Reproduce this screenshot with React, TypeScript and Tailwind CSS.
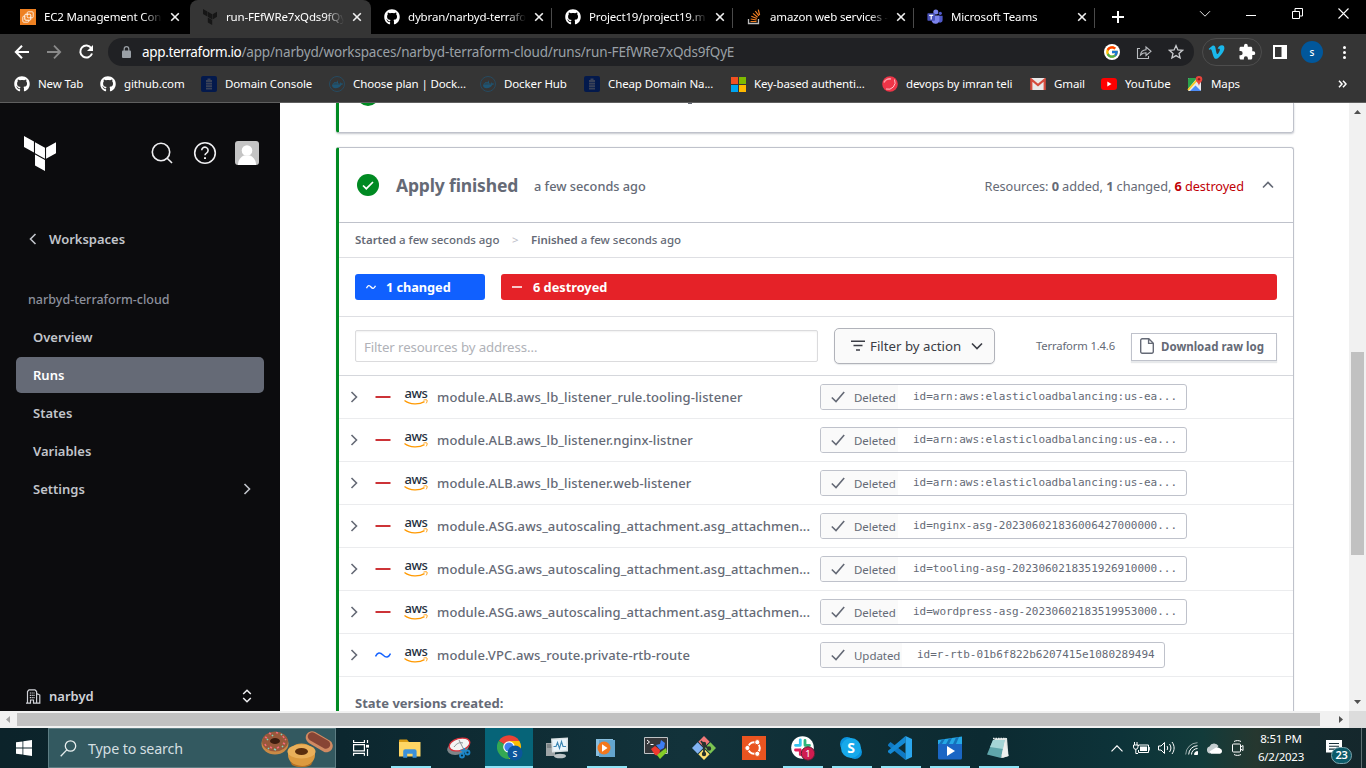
import type { ReactNode } from 'react';
import { FaGithub, FaDocker, FaVimeoV } from 'react-icons/fa';
import { FcGoogle } from 'react-icons/fc';

/* ---------- shared glyphs ---------- */

function Terraform({ className }: { className: string }) {
  return (
    <svg viewBox="1.44 0 21.12 24" preserveAspectRatio="none" className={className} fill="currentColor">
      <path d="M1.44 0v7.575l6.561 3.79V3.787zm21.12 4.227l-6.561 3.791v7.574l6.56-3.787zM8.72 4.23v7.575l6.561 3.787V8.018zm0 8.405v7.575L15.28 24v-7.578z" />
    </svg>
  );
}

function Chevron({ d, className }: { d: 'up' | 'down' | 'left' | 'right'; className: string }) {
  const paths = {
    up: 'M3 10.5 8 5.5l5 5',
    down: 'M3 5.5l5 5 5-5',
    left: 'M10.5 3l-5 5 5 5',
    right: 'M5.5 3l5 5-5 5',
  };
  return (
    <svg viewBox="0 0 16 16" className={className} fill="none" stroke="currentColor" strokeWidth="1.6">
      <path d={paths[d]} />
    </svg>
  );
}

/* ---------- browser chrome ---------- */

function Ec2Icon() {
  return (
    <svg viewBox="0 0 16 16" className="h-4 w-4">
      <rect width="16" height="16" fill="#ee8021" />
      <g fill="none" stroke="#fff" strokeWidth="1">
        <rect x="2.8" y="7.2" width="6" height="6" rx="1" opacity=".8" />
        <rect x="4.8" y="5.2" width="6" height="6" rx="1" fill="#ee8021" />
        <rect x="7.2" y="2.8" width="6" height="6" rx="1" opacity=".8" />
      </g>
    </svg>
  );
}

function TeamsIcon() {
  return (
    <svg viewBox="0 0 16 16" className="h-4 w-4">
      <circle cx="13.3" cy="4.3" r="1.6" fill="#5059c9" />
      <path d="M11 6.8h4.6v4.4a2.4 2.4 0 0 1-4.6 1z" fill="#5059c9" />
      <circle cx="8.8" cy="3" r="2.5" fill="#7b83eb" />
      <path d="M4.8 6.4h7.6v5a4 4 0 0 1-7.6 1z" fill="#7b83eb" />
      <rect x="0.4" y="4.2" width="7.6" height="7.6" rx=".8" fill="#4b53bc" />
      <path d="M2.2 6.4h4M4.2 6.4v4" stroke="#fff" strokeWidth="1.2" />
    </svg>
  );
}

function Tab({ icon, title, active, divider, first }: { icon: ReactNode; title: string; active?: boolean; divider?: boolean; first?: boolean }) {
  return (
    <div
      className={
        active
          ? 'relative flex h-[34px] w-[181px] items-center rounded-t-lg bg-[#353535] pl-3'
          : first
            ? 'relative flex h-[34px] w-[182px] items-center pl-3'
            : 'relative flex h-[34px] w-[181px] items-center pl-[13px]'
      }
    >
      <span className={active ? 'flex w-4 justify-center pr-px' : 'flex w-4 justify-center'}>{icon}</span>
      <span className="ml-2 w-[118px] overflow-hidden whitespace-nowrap text-[11.5px] tracking-[-0.16px] text-white [mask-image:linear-gradient(to_right,#000_84%,transparent)]">
        {title}
      </span>
      <svg viewBox="0 0 10 10" className="ml-[8px] h-2.5 w-2.5" stroke="#f1f1f1" strokeWidth="1.6">
        <path d="M1.2 1.2l7.6 7.6M8.8 1.2 1.2 8.8" />
      </svg>
      {divider && <span className="absolute right-0 top-2 h-5 w-px bg-[#4a4a4a]" />}
    </div>
  );
}

function TabStrip() {
  const gh = <FaGithub className="h-4 w-4 text-white" />;
  return (
    <div className="flex h-[34px] shrink-0 bg-black pl-2">
      <Tab icon={<Ec2Icon />} title="EC2 Management Cons" first />
      <Tab icon={<Terraform className="h-4 w-[14px] text-[#161616]" />} title="run-FEfWRe7xQds9fQy" active />
      <Tab icon={gh} title="dybran/narbyd-terrafor" divider />
      <Tab icon={gh} title="Project19/project19.m" divider />
      <Tab
        icon={
          <svg viewBox="0 0 16 16" className="h-4 w-4" fill="none">
            <path d="M2.5 10v4.5h10V10" stroke="#bcbbbb" strokeWidth="1.3" />
            <path d="M4.5 12.5h6M4.7 10l5.9 1M5.3 7.2l5.5 2.3M7 4.4l4.6 3.8M9.3 2l3.6 4.8M12.3.6l1.3 5.4" stroke="#f48024" strokeWidth="1.2" />
          </svg>
        }
        title="amazon web services -"
        divider
      />
      <Tab icon={<TeamsIcon />} title="Microsoft Teams" divider />
      <div className="flex w-[46px] items-center justify-center">
        <svg viewBox="0 0 12 12" className="h-3 w-3" stroke="#fff" strokeWidth="2">
          <path d="M6 0v12M0 6h12" />
        </svg>
      </div>
      <div className="ml-auto flex h-[27px] items-center text-[#e4e4e4]">
        <div className="flex w-[46px] justify-center">
          <svg viewBox="0 0 12 8" className="h-2 w-3" fill="none" stroke="currentColor">
            <path d="M1 1.2l5 5 5-5" />
          </svg>
        </div>
        <div className="flex w-[46px] justify-center">
          <span className="mt-[3px] h-px w-2.5 bg-white" />
        </div>
        <div className="flex w-[46px] justify-center">
          <svg viewBox="0 0 11 11" className="h-[11px] w-[11px]" fill="none" stroke="#fff">
            <path d="M.5 3.5h7v7h-7zM3 3V.5h7.5V8H8" />
          </svg>
        </div>
        <div className="flex w-[46px] justify-center">
          <svg viewBox="0 0 11 11" className="h-[11px] w-[11px]" stroke="#fff" strokeWidth="1.1">
            <path d="M.5.5l10 10M10.5.5l-10 10" />
          </svg>
        </div>
      </div>
    </div>
  );
}

function AddressBar() {
  return (
    <div className="flex h-[35px] shrink-0 items-center bg-[#353535] pt-px">
      <div className="flex w-[108px] items-center pl-[14px]">
        <svg viewBox="0 0 16 16" className="h-4 w-4" fill="none" stroke="#fff" strokeWidth="2">
          <path d="M15 8H2M8 1.7 1.8 8 8 14.3" />
        </svg>
        <svg viewBox="0 0 16 16" className="ml-4 h-4 w-4" fill="none" stroke="#8a8a8a" strokeWidth="1.8">
          <path d="M1 8h13M8 1.7 14.2 8 8 14.3" />
        </svg>
        <svg viewBox="0 0 16 16" className="ml-4 h-4 w-4">
          <path d="M13.3 4.2A6 6 0 1 0 14 9.5" fill="none" stroke="#fff" strokeWidth="2" />
          <path d="M15 1v6H9z" fill="#fff" />
        </svg>
      </div>
      <div className="flex h-7 w-[1086px] items-center rounded-full bg-[#202124] pl-[14px]">
        <svg viewBox="0 0 9 12" className="h-3 w-[9px]">
          <rect y="4.5" width="9" height="7.5" rx="1" fill="#9aa0a6" />
          <path d="M2.2 5V3a2.3 2.3 0 0 1 4.6 0v2" fill="none" stroke="#9aa0a6" strokeWidth="1.2" />
        </svg>
        <span className="ml-[11px] whitespace-nowrap pt-0.5 text-[13.5px] leading-none tracking-[-0.35px] text-white">app.terraform.io</span>
        <span className="whitespace-nowrap pt-0.5 text-[13.5px] leading-none tracking-[-0.16px] text-[#9aa0a6]">
          /app/narbyd/workspaces/narbyd-terraform-cloud/runs/run-FEfWRe7xQds9fQyE
        </span>
        <div className="ml-auto flex items-center gap-4 pr-[10px]">
          <span className="flex h-4 w-4 items-center justify-center rounded-full bg-white">
            <FcGoogle className="h-[14px] w-[14px]" />
          </span>
          <svg viewBox="0 0 16 16" className="h-4 w-4" fill="none" stroke="#b9bcc0" strokeWidth="1.1">
            <path d="M4 4.5H1.5v10h11V12M4.5 11c.4-3.200 2.200-5 5.500-5.200V3l5 4.300-5 4.200V8.800C7.500 8.800 6 9.500 4.500 11z" />
          </svg>
          <svg viewBox="0 0 16 16" className="h-4 w-4" fill="none" stroke="#c9cbce" strokeWidth="1.3">
            <path d="M8 1.600l1.900 4.300 4.700.4-3.600 3.100 1.100 4.600L8 11.600 3.900 14 5 9.400 1.400 6.300l4.700-.4z" />
          </svg>
        </div>
      </div>
      <div className="ml-2 flex h-7 w-[60px] items-center justify-between rounded-full border border-[#4d4d4d] px-[5px]">
        <FaVimeoV className="h-[18px] w-[17px] text-[#1ab7ea]" />
        <svg viewBox="0 0 24 24" className="h-[18px] w-[18px]" fill="#fff">
          <path d="M20.500 11H19V7c0-1.100-.9-2-2-2h-4V3.500a2.500 2.500 0 0 0-5 0V5H4c-1.100 0-2 .9-2 2v3.800h1.500a2.700 2.700 0 0 1 0 5.400H2V20c0 1.100.9 2 2 2h3.800v-1.500a2.700 2.700 0 0 1 5.400 0V22H17c1.100 0 2-.9 2-2v-4h1.500a2.500 2.500 0 0 0 0-5z" />
        </svg>
      </div>
      <svg viewBox="0 0 14 14" className="ml-[11px] h-[14px] w-[14px]">
        <path d="M1 1h12v12H1z" fill="none" stroke="#fff" strokeWidth="2" />
        <path d="M8.5 0H14v14H8.5z" fill="#fff" />
      </svg>
      <span className="ml-[14px] flex h-[22px] w-[22px] items-center justify-center rounded-full bg-[#01579b] text-[10px] font-medium text-white">
        s
      </span>
      <div className="ml-[20px] flex flex-col gap-[2px]">
        <span className="h-[3px] w-[3px] rounded-full bg-white" />
        <span className="h-[3px] w-[3px] rounded-full bg-white" />
        <span className="h-[3px] w-[3px] rounded-full bg-white" />
      </div>
    </div>
  );
}

function DomainIcon() {
  return (
    <svg viewBox="0 0 16 16" className="h-4 w-4">
      <rect width="16" height="16" rx="2" fill="#03194c" />
      <g fill="#3a4258">
        <rect x="6.5" y="2.5" width="3" height="1.5" />
        <rect x="5" y="4" width="6" height="2" />
        <rect x="5" y="6.6" width="6" height="2" />
        <rect x="5" y="9.2" width="6" height="2" />
        <rect x="5" y="11.8" width="6" height="1.7" />
      </g>
    </svg>
  );
}

function DockerIcon() {
  return (
    <span className="flex h-4 w-4 items-center justify-center rounded-full border border-[#264a60]">
      <FaDocker className="h-[11px] w-[11px] text-[#1f5573]" />
    </span>
  );
}

function Bookmark({ icon, label, w }: { icon: ReactNode; label: string; w: string }) {
  return (
    <div className={'flex shrink-0 items-center ' + w}>
      <span className="flex w-4 shrink-0 justify-center">{icon}</span>
      <span className="ml-2 whitespace-nowrap text-[11.5px] tracking-[-0.12px] text-white">{label}</span>
    </div>
  );
}

function BookmarksBar() {
  const gh = <FaGithub className="h-4 w-4 text-white" />;
  return (
    <div className="flex h-[34px] shrink-0 items-center border-b border-[#5f5f5f] bg-[#353535] pb-[3px] pl-[14px]">
      <Bookmark icon={gh} label="New Tab" w="w-[86px]" />
      <Bookmark icon={gh} label="github.com" w="w-[101px]" />
      <Bookmark icon={<DomainIcon />} label="Domain Console" w="w-[128px]" />
      <Bookmark icon={<DockerIcon />} label="Choose plan | Dock..." w="w-[151px]" />
      <Bookmark icon={<DockerIcon />} label="Docker Hub" w="w-[104px]" />
      <Bookmark icon={<DomainIcon />} label="Cheap Domain Na..." w="w-[146px]" />
      <Bookmark
        icon={
          <svg viewBox="0 0 15 15" className="h-[15px] w-[15px]">
            <path d="M0 0h7v7H0z" fill="#f25022" />
            <path d="M8 0h7v7H8z" fill="#7fba00" />
            <path d="M0 8h7v7H0z" fill="#00a4ef" />
            <path d="M8 8h7v7H8z" fill="#ffb900" />
          </svg>
        }
        label="Key-based authenti..."
        w="w-[152px]"
      />
      <Bookmark
        icon={
          <svg viewBox="0 0 16 16" className="h-4 w-4">
            <circle cx="8" cy="8" r="7.8" fill="#ee3548" />
            <path d="M2 6.500a6 5 0 0 1 7-3.500" stroke="#ff9aa4" fill="none" strokeWidth="1.600" />
            <path d="M4 13a7 7 0 0 0 8.500-9.500" stroke="#ffc0c6" fill="none" strokeWidth="1" />
          </svg>
        }
        label="devops by imran teli"
        w="w-[148px]"
      />
      <Bookmark
        icon={
          <svg viewBox="0 0 16 12" className="h-3 w-4">
            <rect x="1" width="14" height="12" fill="#e9e9e9" />
            <path d="M1.300 12V1.500L8 7l6.700-5.500V12" fill="none" stroke="#d54b3d" strokeWidth="2.200" />
          </svg>
        }
        label="Gmail"
        w="w-[71px]"
      />
      <Bookmark
        icon={
          <svg viewBox="0 0 16 12" className="h-3 w-4">
            <rect width="16" height="12" rx="3" fill="#f00" />
            <path d="M6.300 3.500v5L10.500 6z" fill="#fff" />
          </svg>
        }
        label="YouTube"
        w="w-[86px]"
      />
      <Bookmark
        icon={
          <svg viewBox="0 0 16 16" className="h-4 w-4">
            <rect x="1" y="2" width="13" height="13" rx="1" fill="#e8eaed" />
            <path d="M1 3a1 1 0 0 1 1-1h8L1 13z" fill="#2ba24c" />
            <path d="M3 15l5.500-5.500L14 15z" fill="#4c8bf5" />
            <path d="M1 14 10 4" stroke="#fbc91b" strokeWidth="1.800" />
            <path d="M12 0a3.300 3.300 0 0 1 3.300 3.300C15.300 6 12.500 6.500 12 10c-.5-3.500-3.300-4-3.300-6.700A3.300 3.300 0 0 1 12 0z" fill="#e8453c" />
            <circle cx="12" cy="3.300" r="1.200" fill="#8c1d18" />
          </svg>
        }
        label="Maps"
        w="w-[60px]"
      />
      <svg viewBox="0 0 9 8" className="ml-auto mr-[19px] h-2 w-[9px]" fill="none" stroke="#fff" strokeWidth="1.500">
        <path d="M1 .8 4 4 1 7.200M5 .8 8 4 5 7.200" />
      </svg>
    </div>
  );
}

/* ---------- sidebar ---------- */

function NavItem({ label, active, arrow }: { label: string; active?: boolean; arrow?: boolean }) {
  return (
    <div
      className={
        active
          ? 'mb-0.5 flex h-9 items-center justify-between rounded-[5px] bg-[#656a76] px-[17px] text-white'
          : 'mb-0.5 flex h-9 items-center justify-between px-[17px] text-[#c2c5cb]'
      }
    >
      <span className="pt-0.5">{label}</span>
      {arrow && <Chevron d="right" className="-mr-2 h-4 w-4" />}
    </div>
  );
}

function Sidebar() {
  return (
    <aside className="flex w-[280px] shrink-0 flex-col bg-[#0c0c0e] px-4 text-[13px] font-semibold">
      <div className="flex h-[101px] items-center pl-[8px] pr-[5px]">
        <Terraform className="h-[35px] w-[32px] text-white" />
        <svg viewBox="0 0 24 24" className="-mt-0.5 ml-auto h-6 w-6" fill="none" stroke="#efeff1" strokeWidth="1.600">
          <circle cx="11" cy="11" r="8.700" />
          <path d="M17.200 17.200l4.800 4.800" />
        </svg>
        <svg viewBox="0 0 24 24" className="-mt-0.5 ml-[19px] h-6 w-6" fill="none" stroke="#efeff1" strokeWidth="1.600">
          <circle cx="12" cy="12" r="10.300" />
          <path d="M8.700 9.200a3.200 3.200 0 1 1 4.800 2.900c-1 .6-1.500 1-1.500 2.100" />
          <path d="M12 16.200v1.800" strokeWidth="2" />
        </svg>
        <svg viewBox="0 0 24 24" className="-mt-0.5 ml-[18px] h-6 w-6">
          <rect width="24" height="24" rx="3" fill="#c4c4c4" />
          <circle cx="12" cy="9.500" r="5.300" fill="#fff" />
          <path d="M3 24c0-5 3-8.500 6-9.500h6c3 1 6 4.500 6 9.500z" fill="#fff" />
        </svg>
      </div>
      <div className="mt-[17px] flex h-9 items-center pl-[9px] text-[#c2c5cb]">
        <Chevron d="left" className="h-4 w-4" />
        <span className="ml-2 pt-0.5">Workspaces</span>
      </div>
      <div className="mt-6 flex h-9 items-center pl-3 pt-[3px] text-[12.5px] font-medium text-[#8c909c]">narbyd-terraform-cloud</div>
      <nav className="mt-[2px]">
        <NavItem label="Overview" />
        <NavItem label="Runs" active />
        <NavItem label="States" />
        <NavItem label="Variables" />
        <NavItem label="Settings" arrow />
      </nav>
      <div className="mb-[3px] mt-auto flex h-6 items-center pl-[10px] text-[#d0d2d8]">
        <svg viewBox="0 0 15 15" className="h-[15px] w-[15px]" fill="none" stroke="currentColor" strokeWidth="1.200">
          <path d="M0 14.200h4.500V11h3v3.200h6.300V6l-3-1.500M1.500 14V2.500L3 .8h6l1.600 1.700V14" />
          <path d="M3.800 4h4.800M3.800 6.300h4.800M3.800 8.600h4.800" strokeDasharray="1.200 .6" />
        </svg>
        <span className="ml-2 pt-0.5">narbyd</span>
        <svg viewBox="0 0 10 14" className="ml-auto mr-[12px] h-[14px] w-[10px]" fill="none" stroke="#efeff1" strokeWidth="1.500">
          <path d="M1.200 5 5 1.200 8.800 5M1.200 9 5 12.800 8.800 9" />
        </svg>
      </div>
    </aside>
  );
}

/* ---------- run details ---------- */

function Aws() {
  return (
    <span className="relative block h-[18px] w-6">
      <span className="absolute left-0 top-[-3px] w-6 text-center text-[13px] font-medium leading-[16px] tracking-[-0.35px] text-[#252f3e]">aws</span>
      <svg viewBox="0 0 24 6" className="absolute bottom-px left-0 h-[6px] w-6" fill="none" stroke="#f90" strokeWidth="1.300">
        <path d="M.5 1.400C6 5.800 15 5.800 20.500 2.600" />
        <path d="M19.500 1.100c1.800-.5 3.100-.4 3.500 0s0 2-.8 3.200" strokeWidth="1" />
      </svg>
    </span>
  );
}

const ARN = 'id=arn:aws:elasticloadbalancing:us-ea...';

const resources = [
  { name: 'module.ALB.aws_lb_listener_rule.tooling-listener', state: 'Deleted', id: ARN },
  { name: 'module.ALB.aws_lb_listener.nginx-listner', state: 'Deleted', id: ARN },
  { name: 'module.ALB.aws_lb_listener.web-listener', state: 'Deleted', id: ARN },
  { name: 'module.ASG.aws_autoscaling_attachment.asg_attachmen...', state: 'Deleted', id: 'id=nginx-asg-202306021836006427000000...' },
  { name: 'module.ASG.aws_autoscaling_attachment.asg_attachmen...', state: 'Deleted', id: 'id=tooling-asg-2023060218351926910000...' },
  { name: 'module.ASG.aws_autoscaling_attachment.asg_attachmen...', state: 'Deleted', id: 'id=wordpress-asg-20230602183519953000...' },
  { name: 'module.VPC.aws_route.private-rtb-route', state: 'Updated', id: 'id=r-rtb-01b6f822b6207415e1080289494' },
];

function ResourceRow({ name, state, id }: { name: string; state: string; id: string }) {
  const updated = state === 'Updated';
  return (
    <div className="flex h-[43px] items-center border-b border-[#ebecee] pl-[7px]">
      <Chevron d="right" className="h-4 w-4 text-[#656a76]" />
      {updated ? (
        <svg viewBox="0 0 16 8" className="ml-[13px] h-2 w-4" fill="none" stroke="#1563ff" strokeWidth="1.500">
          <path d="M.5 5.500C2.500 1 5 1 8 4s5.500 3 7.500-1.500" />
        </svg>
      ) : (
        <svg viewBox="0 0 16 2" className="ml-[13px] h-[2px] w-4">
          <path d="M.5 1h15" stroke="#c00005" strokeWidth="1.600" />
        </svg>
      )}
      <span className="ml-[13px]">
        <Aws />
      </span>
      <span className="ml-[9px] w-[383px] whitespace-nowrap pt-0.5 text-[13px] font-medium tracking-[0.09px] text-[#656a76]">{name}</span>
      <span className="flex h-[26px] items-center overflow-hidden rounded-[3px] border border-[#bfc2cb] text-[#656a76]">
        <span className={updated ? 'flex h-full w-[81px] items-center bg-[#fafafa] pl-[10px]' : 'flex h-full w-[77px] items-center bg-[#fafafa] pl-[10px]'}>
          <svg viewBox="0 0 14 12" className="h-3 w-[14px]" fill="none" stroke="currentColor" strokeWidth="1.600">
            <path d="M.8 6.500 5 10.500 13.200 1" />
          </svg>
          <span className="ml-[9px] pt-px text-[11.5px] tracking-[-0.05px]">{state}</span>
        </span>
        <span className='whitespace-nowrap pl-[15px] pr-[9px] font-["DejaVu_Sans_Mono",monospace] text-[11px] tracking-[-0.022px]'>{id}</span>
      </span>
    </div>
  );
}

function SuccessBadge() {
  return (
    <svg viewBox="0 0 22 22" className="h-[22px] w-[22px]">
      <circle cx="11" cy="11" r="11" fill="#008a22" />
      <path d="M6 11.500 9.300 14.700 16 8" fill="none" stroke="#fff" strokeWidth="1.700" />
    </svg>
  );
}

function RunDetails() {
  return (
    <main className="flex min-w-0 flex-1 flex-col overflow-hidden bg-white pl-[56px] pr-[55px] text-[#656a76]">
      <section className="flex h-[30px] shrink-0 rounded-b-[3px] border-b border-l-[3px] border-r border-[#bfc2cb] border-l-[#008a22] shadow-[0_1px_2px_rgba(60,70,90,0.3)]">
        <div className="flex h-[29px] w-full items-start overflow-hidden pl-[18px]">
          <span className="-mt-[19px]">
            <SuccessBadge />
          </span>
          <span className="ml-[309px] h-px w-1 bg-[#656a76]" />
        </div>
      </section>
      <section className="mt-[14px] flex shrink-0 flex-col rounded-t-[3px] border-l-[3px] border-r border-t border-[#bfc2cb] border-l-[#008a22] shadow-[0_0_1px_rgba(60,70,90,0.3)]">
        <header className="flex h-[75px] items-center border-b border-[#bfc2cb] pl-[18px] pr-[17px]">
          <SuccessBadge />
          <h2 className="ml-[17px] w-[122px] whitespace-nowrap pt-px text-[17.5px] font-bold tracking-[-0.15px]">Apply finished</h2>
          <span className="ml-4 pt-[3px] text-[12.75px] font-medium">a few seconds ago</span>
          <span className="ml-auto pt-[3px] text-[12.75px] tracking-[-0.08px]">
            Resources: <b>0</b> added, <b>1</b> changed, <span className="text-[#c00005]"><b>6</b> destroyed</span>
          </span>
          <Chevron d="up" className="ml-4 h-4 w-4" />
        </header>
        <div className="flex h-[35px] items-center border-b border-[#dedfe3] pl-4 text-[11.5px] font-medium tracking-[-0.03px]">
          <span className="w-[145px] whitespace-nowrap"><b className="font-semibold">Started</b> a few seconds ago</span>
          <span className="ml-[12px] w-[19px] text-[#bfc2cb]">&gt;</span>
          <span><b className="font-semibold">Finished</b> a few seconds ago</span>
        </div>
        <div className="flex h-[59px] items-center gap-4 border-b border-[#dedfe3] px-4 text-[12.75px] font-bold text-white">
          <div className="flex h-[26px] w-[130px] items-center rounded-[3px] bg-[#1060ff] pl-[11px]">
            <svg viewBox="0 0 10 6" className="h-[6px] w-[10px]" fill="none" stroke="#fff" strokeWidth="1.300">
              <path d="M.5 4.200C2 1 3.500 1.200 5 3s3 2 4.500-1.200" />
            </svg>
            <span className="ml-[10px] pt-0.5 tracking-[-0.05px]">1 changed</span>
          </div>
          <div className="flex h-[26px] flex-1 items-center rounded-[3px] bg-[#e52228] pl-[11px]">
            <svg viewBox="0 0 10 2" className="h-[2px] w-[10px]">
              <path d="M0 1h10" stroke="#fff" strokeWidth="1.500" />
            </svg>
            <span className="ml-[11px] pt-0.5">6 destroyed</span>
          </div>
        </div>
        <div className="flex h-[59px] items-center border-b border-[#d5d7dc] px-4">
          <div className="flex h-8 w-[463px] items-center rounded-[2px] border border-[#dbdbdd] pl-2 pt-[4px] text-[13.25px] tracking-[-0.12px] text-[#b0b2b8] shadow-[inset_0_1px_2px_rgba(0,0,0,0.06)]">
            Filter resources by address…
          </div>
          <div className="ml-4 flex h-9 w-[161px] items-center rounded-[5px] border border-[#b1b3ba] bg-[#fafafa] pl-4 text-[13.25px] text-[#3b3d45] shadow-[0_1px_1px_rgba(60,70,90,0.12)]">
            <svg viewBox="0 0 14 12" className="h-3 w-[14px]" stroke="currentColor" strokeWidth="1.500">
              <path d="M0 1.300h14M2.500 5.500h9M5 10h4" />
            </svg>
            <span className="ml-[5px] w-[91px] whitespace-nowrap pt-0.5">Filter by action</span>
            <Chevron d="down" className="ml-2 h-4 w-4" />
          </div>
          <span className="ml-auto whitespace-nowrap text-[11.25px] tracking-[-0.15px]">Terraform 1.4.6</span>
          <div className="ml-[16px] mt-0.5 flex h-7 w-[146px] items-center border border-[#bfc2cb] pl-2 text-[11.5px] font-bold shadow-[0_2px_1px_rgba(60,70,90,0.12)]">
            <svg viewBox="0 0 14 16" className="-mt-0.5 h-4 w-[14px]" fill="none" stroke="currentColor" strokeWidth="1.400">
              <path d="M2.200.7h6.600l4.500 4.500v8.600a1.500 1.500 0 0 1-1.500 1.500H2.200A1.500 1.500 0 0 1 .7 13.800V2.200A1.500 1.500 0 0 1 2.200.7zM8.600.7v4.700h4.700" />
            </svg>
            <span className="ml-[7px] whitespace-nowrap">Download raw log</span>
          </div>
        </div>
        {resources.map((r, i) => (
          <ResourceRow key={i} {...r} />
        ))}
        <div className="h-[60px] pl-4 pt-[17px] text-[13px] font-bold leading-[19px]">State versions created:</div>
      </section>
    </main>
  );
}

/* ---------- scroll bars ---------- */

function VerticalScroll() {
  return (
    <div className="flex w-[17px] shrink-0 flex-col items-center bg-[#f1f1f1]">
      <svg viewBox="0 0 7 4" className="mt-[7px] h-1 w-[7px]" fill="#505050">
        <path d="M0 4 3.500 0 7 4z" />
      </svg>
      <span className="mt-[238px] h-[203px] w-[13px] bg-[#c1c1c1]" />
      <svg viewBox="0 0 7 4" className="mb-[7px] mt-auto h-1 w-[7px]" fill="#505050">
        <path d="M0 0h7L3.500 4z" />
      </svg>
    </div>
  );
}

function HorizontalScroll() {
  return (
    <div className="flex h-[17px] shrink-0 items-center bg-[#f1f1f1]">
      <svg viewBox="0 0 4 7" className="ml-[6px] h-[7px] w-1" fill="#a3a3a3">
        <path d="M4 0v7L0 3.500z" />
      </svg>
      <span className="ml-[7px] h-[13px] w-[1303px] bg-[#c1c1c1]" />
      <svg viewBox="0 0 4 7" className="ml-[19px] h-[7px] w-1" fill="#505050">
        <path d="M0 0v7l4-3.500z" />
      </svg>
      <span className="ml-auto h-full w-[17px] bg-[#dcdcdc]" />
    </div>
  );
}

/* ---------- task bar ---------- */

function Donuts() {
  return (
    <svg viewBox="0 0 74 40" className="h-10 w-[74px]">
      <ellipse cx="15" cy="15.500" rx="13.500" ry="11" fill="#c98a45" />
      <ellipse cx="15" cy="13.500" rx="13" ry="10" fill="#98593b" />
      <ellipse cx="15" cy="13" rx="5" ry="3" fill="#3d1d10" />
      <path d="M5 9l2 1M9 5l2 1M16 4.500l2 .5M23 8l1 2M5 16l1 2M10 19l2 1M17 20l2-1M23 15l2 1M25 12l1-1" stroke="#f26a7a" strokeWidth="1.600" />
      <path d="M7 12l1-1M12 8l1-1M21 6l1 1M14 21l2 1M8 20l1 1M22 19l1-1" stroke="#7fd6c0" strokeWidth="1.600" />
      <g strokeLinecap="round" fill="none">
        <path d="M52 9.500 66.500 18" stroke="#d18a62" strokeWidth="12.500" />
        <path d="M52 8.500 66 16.500" stroke="#874434" strokeWidth="8.500" />
      </g>
      <ellipse cx="41.500" cy="27" rx="13.500" ry="11.500" fill="#dc9a3f" />
      <path d="M30 33c5 6 18 7 23 0l-2 4c-6 3-13 3-19 0z" fill="#b66f22" />
      <ellipse cx="41.500" cy="23.500" rx="14" ry="7" fill="#eab05a" />
      <ellipse cx="41.500" cy="23.500" rx="6.500" ry="3.500" fill="#5a2d0c" />
    </svg>
  );
}

function Task({ children, open, active }: { children: ReactNode; open?: boolean; active?: boolean }) {
  return (
    <div className="relative flex h-10 w-[49px] shrink-0 items-center justify-center">
      {active && <span className="absolute inset-y-0 left-[2px] w-[48px] border-b-2 border-[#8fe4f7] bg-[#066478]" />}
      <span className={active ? 'relative left-[2px]' : 'relative'}>{children}</span>
      {open && <span className="absolute bottom-0 left-[6px] h-[2px] w-10 bg-[#8fe4f7]" />}
    </div>
  );
}

function Taskbar() {
  return (
    <footer className="flex h-10 shrink-0 items-center bg-[linear-gradient(to_right,#0c232a_0%,#0c272f_25%,#12323a_50%,#0c2a31_72%,#0d3339_82%,#123b3a_88%,#26372f_92%,#14292d_96%,#15272c_100%)]">
      <div className="flex w-12 justify-center">
        <svg viewBox="0 0 16 16" className="h-4 w-4" fill="#fff">
          <path d="M0 2.300 6.500 1.400v6.200H0zM7.300 1.300 16 0v7.600H7.300zM0 8.400h6.500v6.200L0 13.700zM7.300 8.400H16V16l-8.700-1.300z" />
        </svg>
      </div>
      <div className="flex h-10 w-[288px] items-center border border-[#5d7d83] bg-[#335960] pl-[11px]">
        <svg viewBox="0 0 17 17" className="h-[17px] w-[17px]" fill="none" stroke="#e8eeee" strokeWidth="1.300">
          <circle cx="10.500" cy="6" r="5.200" />
          <path d="M6.800 9.900.7 16.200" />
        </svg>
        <span className="ml-[11px] pt-0.5 text-[14.25px] tracking-[-0.15px] text-[#d4dfe0]">Type to search</span>
        <span className="ml-auto mr-px">
          <Donuts />
        </span>
      </div>
      <div className="flex">
        <Task>
          <svg viewBox="0 0 16 16" className="h-4 w-4" fill="none" stroke="#fff" strokeWidth="1.200">
            <path d="M.6 0v2.500h10.800V0M.6 4.600h10.800v6.300H.6zM.6 15.800v-2.400h10.800v2.400M14.500 0v3M14.500 9v7" />
            <path d="M13 4.800h3v2.800h-3z" fill="#fff" stroke="none" />
          </svg>
        </Task>
        <Task open>
          <svg viewBox="0 0 22 19" className="h-[19px] w-[22px]">
            <path d="M0 1.500A1 1 0 0 1 1 .5h7l2 2.500H0z" fill="#d99b14" />
            <path d="M0 3h21.500v14.500H0z" fill="#ffd664" />
            <path d="M4.200 18.800v-6.500a2 2 0 0 1 2-2h9.400a2 2 0 0 1 2 2v6.500h-4v-4H8.200v4z" fill="#3c91d9" />
          </svg>
        </Task>
        <Task>
          <svg viewBox="0 0 24 22" className="h-[22px] w-6">
            <ellipse cx="11" cy="11" rx="11" ry="6.500" fill="#7e8589" transform="rotate(-15 11 11)" />
            <ellipse cx="12.500" cy="7.500" rx="10.500" ry="6" fill="#f4f4f4" stroke="#d8323c" strokeWidth="1.300" transform="rotate(-15 12.500 7.500)" />
            <path d="M7 10c3-4 6-5 9-4M12 3l5 10" stroke="#8b9296" fill="none" />
            <g fill="none" stroke="#1c86c8" strokeWidth="1.800">
              <circle cx="15" cy="18.500" r="2" />
              <circle cx="20.500" cy="15.500" r="2" />
              <path d="M16 16.500 17.500 11M18.800 14.800 13.500 13" />
            </g>
          </svg>
        </Task>
        <Task active>
          <svg viewBox="0 0 26 26" className="h-[26px] w-[26px]">
            <path d="M12 12 1.800 6A12 12 0 0 1 22.400 6z" fill="#ea4335" />
            <path d="M12 12V6h10.400A12 12 0 0 1 12 24z" fill="#fbbc05" />
            <path d="M12 12l4 5-4 7A12 12 0 0 1 1.600 6z" fill="#34a853" />
            <circle cx="12" cy="12" r="5.800" fill="#fff" />
            <circle cx="12" cy="12" r="4.600" fill="#3f7ff0" />
            <circle cx="18" cy="18" r="7.500" fill="#0b559c" />
            <text x="18" y="21.500" textAnchor="middle" fontSize="10" fill="#fff" fontFamily="Noto Sans">s</text>
          </svg>
        </Task>
        <Task>
          <svg viewBox="0 0 24 22" className="h-[22px] w-6">
            <path d="M1 6h9v13H1z" fill="#9da4a6" />
            <path d="M2 8h7M2 10h7" stroke="#5c6668" />
            <path d="M6 1.500 23 .5v14L7 15.500z" fill="#dce3e5" />
            <path d="M7.500 3 21.500 2v11L8.500 14z" fill="#eaf6fc" />
            <path d="M8.500 9.500h2.500l1.500-4 2 6 2-7 1.500 5h3" fill="none" stroke="#3b87b4" strokeWidth="1.100" />
            <ellipse cx="15" cy="19" rx="6" ry="2.300" fill="#bcc4c6" />
          </svg>
        </Task>
        <Task open>
          <svg viewBox="0 0 21 20" className="h-5 w-[21px]">
            <path d="M1 1h17v17H1z" fill="#89bfdf" />
            <path d="M4 2h16v17H4z" fill="#63a5ce" />
            <circle cx="9" cy="10" r="6.500" fill="#f2781e" />
            <path d="M7 6.300v7.400l5.500-3.700z" fill="#fff" />
          </svg>
        </Task>
        <Task>
          <svg viewBox="0 0 24 24" className="ml-[3px] h-6 w-6">
            <path d="M.5 1.500h23v16H.5z" fill="#35373a" stroke="#bfc3c5" />
            <path d="M3 4l2.500 2L3 8M6.500 8.500h3" stroke="#fff" fill="none" />
            <path d="M12 9l4-1 1-4 4 3-1 5-4 2z" fill="#3d7df2" />
            <path d="M7 13l4-3 5 4-1 6-4-1z" fill="#f0392f" />
            <path d="M13 19l5-4 4-3 1 4-7 7z" fill="#84cc28" />
          </svg>
        </Task>
        <Task>
          <svg viewBox="0 0 24 24" className="ml-px h-6 w-6">
            <g transform="rotate(45 12 12)">
              <rect x="3.500" y="3.500" width="8" height="8" fill="#f07878" />
              <rect x="12.500" y="3.500" width="8" height="8" fill="#7bc452" />
              <rect x="3.500" y="12.500" width="8" height="8" fill="#81b2f2" />
              <rect x="12.500" y="12.500" width="8" height="8" fill="#ffe070" />
            </g>
            <g stroke="#26332f" strokeWidth="1.800" fill="#26332f">
              <path d="M9 5l3 4v9M12 9l5 4" fill="none" />
              <circle cx="12" cy="8" r="1.300" />
              <circle cx="12" cy="18" r="1.300" />
              <circle cx="17" cy="12.500" r="1.300" />
            </g>
          </svg>
        </Task>
        <Task>
          <span className="ml-[2px] flex h-6 w-6 items-center justify-center bg-[#e95420]">
            <svg viewBox="0 0 20 20" className="h-5 w-5" fill="none" stroke="#fff" strokeWidth="2">
              <circle cx="10" cy="10" r="5.800" />
              <g fill="#fff" stroke="#e95420" strokeWidth="1">
                <circle cx="3.400" cy="10" r="2.600" />
                <circle cx="13.300" cy="4.200" r="2.600" />
                <circle cx="13.300" cy="15.800" r="2.600" />
              </g>
            </svg>
          </span>
        </Task>
        <Task open>
          <svg viewBox="0 0 26 26" className="ml-[2px] h-[26px] w-[26px]">
            <circle cx="12.500" cy="12.500" r="11.300" fill="#fff" />
            <g strokeWidth="2.800" strokeLinecap="round">
              <path d="M10.300 4.800v5M5.500 10.300h4.800" stroke="#36c5f0" />
              <path d="M15 5.500v4.800M15 10.300h4.500" stroke="#2eb67d" />
              <path d="M10.300 15v4.500M5.500 15h4.600" stroke="#e01e5a" />
              <path d="M15 15h4.500" stroke="#ecb22e" />
            </g>
            <circle cx="18" cy="18.500" r="6.700" fill="#cf1c50" stroke="#5b2032" />
            <text x="18" y="22" textAnchor="middle" fontSize="9.500" fill="#fff" fontFamily="Noto Sans">1</text>
          </svg>
        </Task>
        <Task open>
          <svg viewBox="0 0 24 24" className="ml-px h-6 w-6">
            <circle cx="8" cy="8" r="7" fill="#0b93dd" />
            <circle cx="16" cy="16" r="7" fill="#0b93dd" />
            <circle cx="12" cy="12" r="10" fill="#17a9ea" />
            <text x="12" y="17" textAnchor="middle" fontSize="14" fontWeight="700" fill="#fff" fontFamily="Noto Sans">S</text>
          </svg>
        </Task>
        <Task open>
          <svg viewBox="0 0 24 24" className="ml-px h-6 w-6">
            <path d="M0 8.500 2.500 6 17.500 17.500V24L0 9.800z" fill="#0f79c4" />
            <path d="M17.500 0v6.500L2.500 18 0 16.200v-1.500z" fill="#1489d4" />
            <path d="M17.500 0 24 3v18l-6.500 3z" fill="#2aa6ee" />
          </svg>
        </Task>
        <Task open>
          <svg viewBox="0 0 24 24" className="ml-[2px] h-6 w-6">
            <path d="M0 4 24 .5V9H0z" fill="#25a8e6" />
            <path d="M4 3.400 7 3l-3 5H1zM11 2.400l3-.4-3 6H8zM18 1.400l3-.4-3 7h-3z" fill="#1473b8" />
            <path d="M0 8h24v14a1.500 1.500 0 0 1-1.500 1.500h-21A1.500 1.500 0 0 1 0 22z" fill="#1a66c4" />
            <path d="M9 10v10l8-5z" fill="#fff" />
          </svg>
        </Task>
        <Task open>
          <svg viewBox="0 0 22 22" className="h-[22px] w-[22px]">
            <path d="M7 1.500 20 1l1.500 18-6 2z" fill="#dfe6e4" />
            <path d="M6 3h12l-4 18L0 17.500z" fill="#5fa6ab" />
            <path d="M6 3h12l-2 9L3 10z" fill="#a5d5d6" />
            <path d="M6 1.500h13" stroke="#e9eeee" strokeWidth="1.500" strokeDasharray="1.500 1" />
            <path d="M14 21l4-18 3.500 16z" fill="#eef1ef" />
          </svg>
        </Task>
      </div>
      <div className="ml-auto flex items-center text-white">
        <svg viewBox="0 0 12 7" className="h-[7px] w-3" fill="none" stroke="#fff" strokeWidth="1.200">
          <path d="M.5 6.300 6 .8l5.500 5.500" />
        </svg>
        <svg viewBox="0 0 17 12" className="ml-[10px] h-3 w-[17px]" fill="none" stroke="#fff">
          <path d="M5.500 4V3h10v7.500H5.500V8M16.300 5v3.500" />
          <path d="M7 4.500h7V9H7z" fill="#fff" stroke="none" />
          <path d="M1.500 0v3M4 0v3M.5 3h4.500v2a2 2 0 0 1-4.500 0zM2.800 7v4.500H5" />
        </svg>
        <svg viewBox="0 0 17 14" className="ml-[8px] h-[14px] w-[17px]" fill="none" stroke="#fff">
          <path d="M.5 5h2.500L6.500 1.500v11L3 9H.5z" />
          <path d="M9 5c.9 1.200.9 2.800 0 4M11.500 3c1.900 2.500 1.900 5.500 0 8M14 1c2.800 3.800 2.800 8.200 0 12" />
        </svg>
        <svg viewBox="0 0 13 13" className="ml-[10px] h-[13px] w-[13px]" fill="none" stroke="#fff">
          <path d="M.7 12.500A12 12 0 0 1 12.500.7" opacity=".55" />
          <path d="M3.700 12.500a9 9 0 0 1 8.800-8.800M6.500 12.500a6 6 0 0 1 6-6" />
          <path d="M9.500 12.500a3 3 0 0 1 3-3v3z" fill="#fff" />
        </svg>
        <svg viewBox="0 0 17 11" className="ml-[8px] h-[11px] w-[17px]">
          <path d="M4 10.500a3.600 3.600 0 0 1-.5-7A5 5 0 0 1 12.500 3L9 8z" fill="#c5ced0" />
          <path d="M5 10.700 3.500 8.500 10 4.500a5 5 0 0 1 4.500 1.300A2.600 2.600 0 0 1 14 10.700z" fill="#fff" />
        </svg>
        <svg viewBox="0 0 12 16" className="ml-[9px] h-4 w-3" fill="none" stroke="#fff">
          <rect x=".5" y="4" width="8" height="8" rx="1" />
          <path d="M8.500 7l2.500-1.500v5L8.500 9M2 1.500C4 .3 7 .3 9 1.500M2 14.500c2 1.200 5 1.200 7 0" />
        </svg>
        <div className="ml-[9px] w-[56px] pb-px text-center text-[11.5px] leading-[18px] tracking-[-0.25px]">
          <div>8:51 PM</div>
          <div>6/2/2023</div>
        </div>
        <div className="relative ml-[17px] mt-[9px] h-[26px] w-[27px]">
          <svg viewBox="0 0 16 16" className="h-4 w-4">
            <path d="M0 0h16v12.500h-4V16l-3.500-3.500H0z" fill="#fff" />
            <path d="M3 3.500h10M3 6.300h10M3 9.100h6" stroke="#18303a" strokeWidth="1.100" />
          </svg>
          <span className="absolute left-[5px] top-[7px] flex h-[17px] w-[21px] items-center justify-center rounded-full border border-[#7fa5ae] bg-[#0b5a69] text-[11px] font-semibold tracking-[-0.2px]">
            23
          </span>
        </div>
        <span className="ml-[8px] mr-1 h-10 w-px bg-[#5f6f72]" />
      </div>
    </footer>
  );
}

export default function App() {
  return (
    <div className='flex h-[768px] w-[1366px] flex-col overflow-hidden bg-white font-["Noto_Sans",sans-serif]'>
      <TabStrip />
      <AddressBar />
      <BookmarksBar />
      <div className="flex h-[608px] shrink-0">
        <Sidebar />
        <RunDetails />
        <VerticalScroll />
      </div>
      <HorizontalScroll />
      <Taskbar />
    </div>
  );
}
